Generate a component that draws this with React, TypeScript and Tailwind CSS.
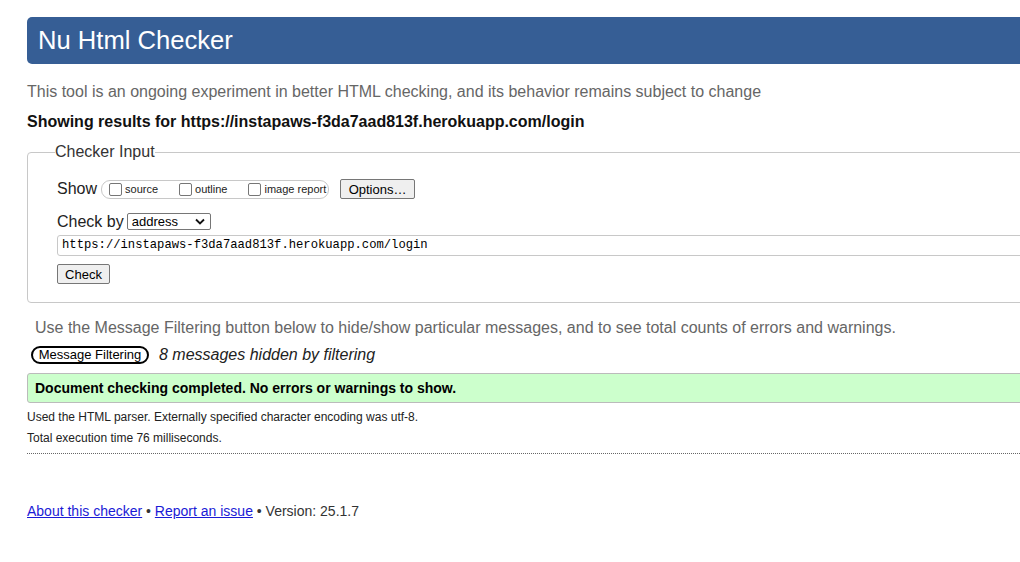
const ARIAL = "font-['Liberation_Sans',Arial,sans-serif]";

function Box({ label }: { label: string }) {
  return (
    <label className="inline-flex shrink-0 items-end whitespace-nowrap text-[11px] leading-none text-[#222]">
      <span className="mr-[3px] ml-[4px] inline-block h-[13px] w-[13px] rounded-[2px] border border-[#767676] bg-white" />
      <span className="mb-[1px]">{label}</span>
    </label>
  );
}

export default function App() {
  return (
    <div className={`h-[562px] w-[1020px] overflow-hidden bg-white ${ARIAL}`}>
      <div className="w-[1120px] pl-[27px] pt-[17px]">
        <header className="flex h-[47px] items-center rounded-[5px] bg-[#365e95] px-[11px]">
          <h1 className="text-[25.6px] leading-none text-white">Nu Html Checker</h1>
        </header>

        <p className="mt-[19px] text-[16px] leading-[18px] text-[#666]">
          This tool is an ongoing experiment in better HTML checking, and its behavior remains subject to change
        </p>
        <p className="mt-[12px] text-[16px] font-bold leading-[18px] text-[#111]">
          Showing results for https://instapaws-f3da7aad813f.herokuapp.com/login
        </p>

        <fieldset className="mt-[12px] rounded-[4px] border border-[#c8c8c8] pb-[16px] pl-[29px] pt-[18px]">
          <legend className="-ml-[2px] text-[16px] leading-[18px] text-[#333]">Checker Input</legend>

          <div className="flex h-[20px] items-center">
            <span className="text-[16px] leading-none text-[#222]">Show</span>
            <div className="ml-[4px] flex h-[19px] w-[228px] items-center rounded-[9px] border border-[#c8c8c8] pl-[3px]">
              <Box label="source" />
              <span className="w-[17px] shrink-0" />
              <Box label="outline" />
              <span className="w-[17px] shrink-0" />
              <Box label="image report" />
            </div>
            <button className="ml-[11px] h-[20px] w-[75px] rounded-[2px] border border-[#767676] bg-[#efefef] text-[13px] leading-none text-black">
              Options…
            </button>
          </div>

          <div className="mt-[13px] flex h-[19px] items-center">
            <span className="text-[16px] leading-none text-[#222]">Check by</span>
            <div className="ml-[3px] flex h-[17px] w-[84px] items-center justify-between rounded-[2px] border border-[#767676] bg-white pl-[4px] pr-[5px] text-[13px] leading-none text-black">
              <span>address</span>
              <svg width="10" height="7" viewBox="0 0 10 7" fill="none">
                <path d="M1 1.5 L5 5.5 L9 1.5" stroke="#111" strokeWidth="1.8" />
              </svg>
            </div>
          </div>

          <div className="mt-[4px] flex h-[21px] items-center rounded-[3px] border border-[#c8c8c8] pl-[4px] font-['Liberation_Mono',monospace] text-[12.2px] text-black">
            https://instapaws-f3da7aad813f.herokuapp.com/login
          </div>

          <button className="mt-[8px] h-[20px] w-[53px] rounded-[2px] border border-[#767676] bg-[#efefef] text-[13px] leading-none text-black">
            Check
          </button>
        </fieldset>

        <p className="mt-[16px] pl-[8px] text-[16px] leading-[18px] text-[#666]">
          Use the Message Filtering button below to hide/show particular messages, and to see total counts of errors and warnings.
        </p>

        <div className="mt-[9px] flex items-center">
          <button className="ml-[4px] h-[18px] w-[118px] rounded-full border-2 border-black bg-white text-[13px] leading-none text-black">
            Message Filtering
          </button>
          <span className="ml-[10px] text-[16px] italic leading-none text-[#222]">8 messages hidden by filtering</span>
        </div>

        <div className="mt-[9px] flex h-[30px] items-center rounded-l-[3px] border border-[#bbb] bg-[#ccffcc] pl-[7px]">
          <span className="text-[14px] font-bold leading-none text-black">
            Document checking completed. No errors or warnings to show.
          </span>
        </div>

        <p className="mt-[7px] text-[12px] leading-[14px] text-[#222]">
          Used the HTML parser. Externally specified character encoding was utf-8.
        </p>
        <p className="mt-[7px] text-[12px] leading-[14px] text-[#222]">Total execution time 76 milliseconds.</p>

        <div className="mt-[8px] border-t border-dotted border-[#666]" />

        <p className="mt-[49px] text-[14px] leading-[16px] text-[#333]">
          <a href="#" className="text-[#1a1ad6] underline">About this checker</a>
          {" • "}
          <a href="#" className="text-[#1a1ad6] underline">Report an issue</a>
          {" • Version: 25.1.7"}
        </p>
      </div>
    </div>
  );
}
